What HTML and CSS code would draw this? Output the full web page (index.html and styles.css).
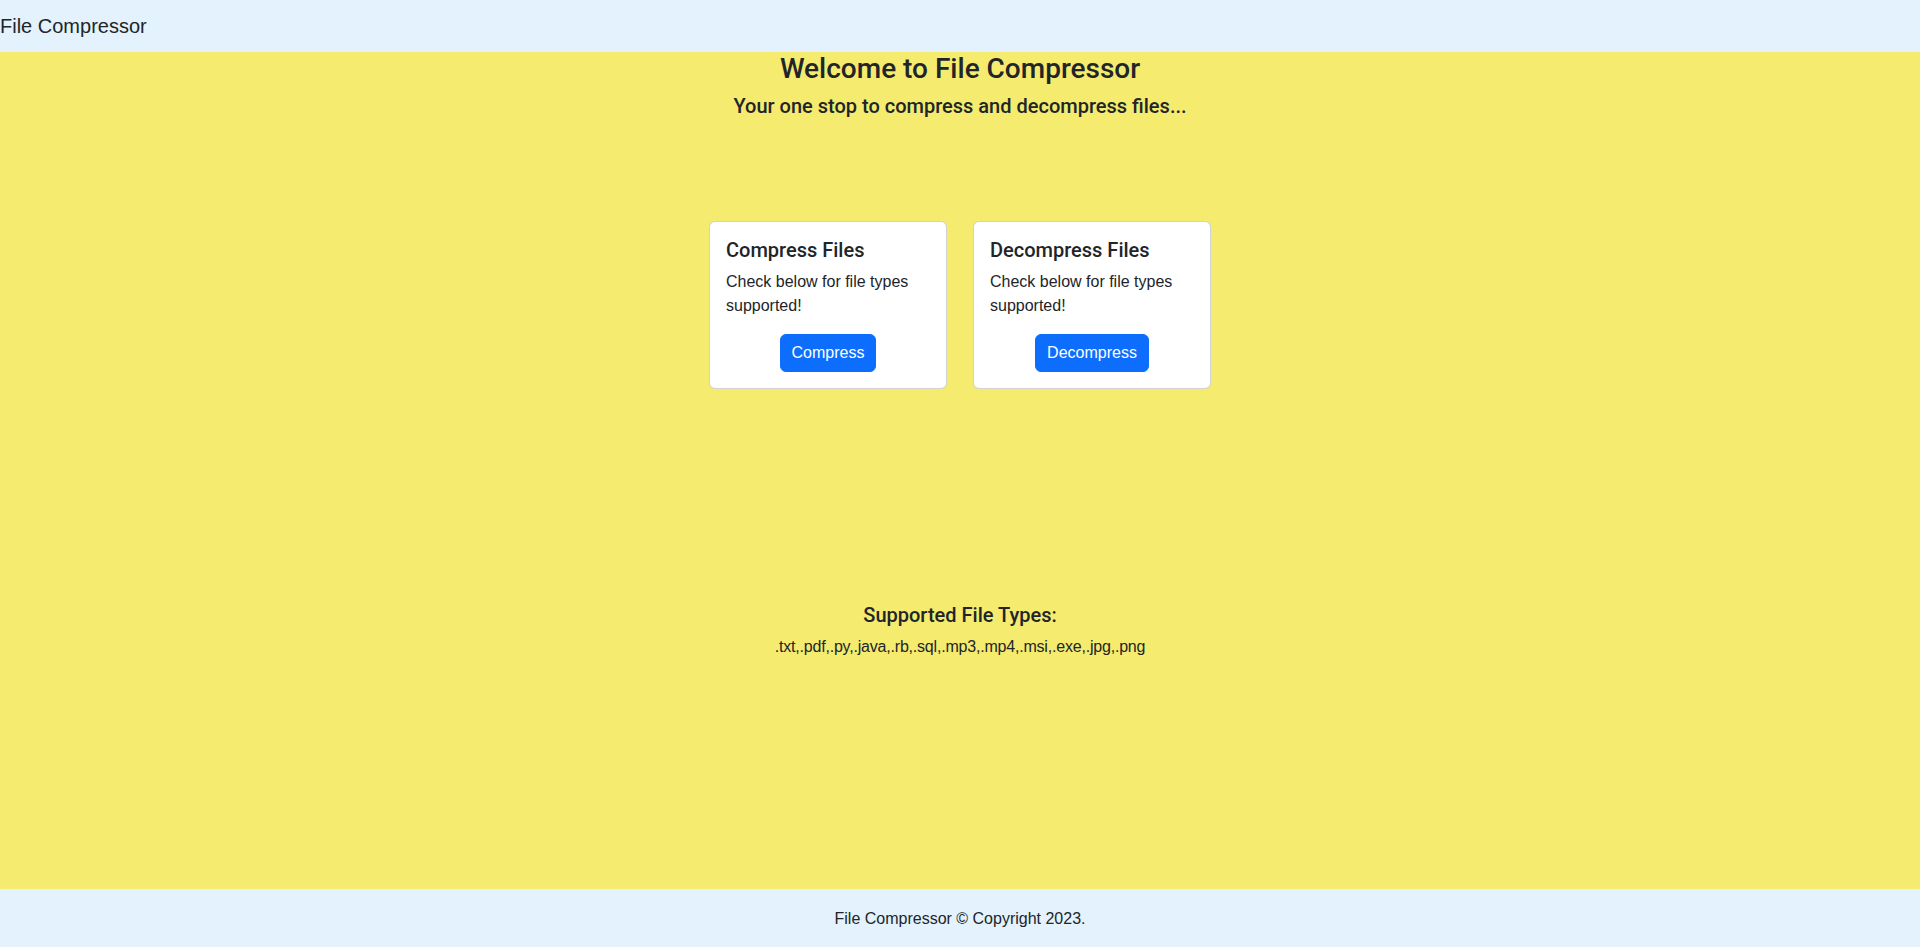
FILE: index.html
```html
<!DOCTYPE html>
<html lang="en">
<head>
<meta charset="utf-8">
<title>File Compressor</title>
<link rel="stylesheet" href="styles.css">
</head>
<body>
<div class="page">
  <nav class="navbar">
    <a class="brand" href="#">File Compressor</a>
  </nav>
  <main class="main">
    <section class="hero">
      <h3 class="hero-title">Welcome to File Compressor</h3>
      <h5 class="hero-sub">Your one stop to compress and decompress files...</h5>
    </section>
    <section class="cards">
      <div class="card">
        <h5 class="card-title">Compress Files</h5>
        <p class="card-text">Check below for file types supported!</p>
        <div class="card-action"><a class="btn" href="#">Compress</a></div>
      </div>
      <div class="card">
        <h5 class="card-title">Decompress Files</h5>
        <p class="card-text">Check below for file types supported!</p>
        <div class="card-action"><a class="btn" href="#">Decompress</a></div>
      </div>
    </section>
    <section class="supported">
      <h5 class="supported-title">Supported File Types:</h5>
      <p class="supported-list">.txt,.pdf,.py,.java,.rb,.sql,.mp3,.mp4,.msi,.exe,.jpg,.png</p>
    </section>
  </main>
  <footer class="footer">
    <p class="footer-text">File Compressor &copy; Copyright 2023.</p>
  </footer>
</div>
</body>
</html>
```

FILE: styles.css
```css
* { box-sizing: border-box; }

html, body {
  margin: 0;
  padding: 0;
}

body {
  font-family: "Liberation Sans", Arial, sans-serif;
  font-size: 16px;
  line-height: 1.5;
  color: #212529;
  background: #f5eb6e;
}

.page {
  display: flex;
  flex-direction: column;
  min-height: 100vh;
}

.navbar {
  height: 52px;
  background: #e3f2fd;
  display: flex;
  align-items: center;
  padding-bottom: 1px;
}

.brand {
  font-size: 20px;
  line-height: 30px;
  color: #212529;
  text-decoration: none;
}

.main {
  flex: 1;
  background: #f5eb6e;
}

.hero {
  text-align: center;
}

.hero-title,
.hero-sub,
.card-title,
.supported-title {
  font-family: Roboto, "Liberation Sans", Arial, sans-serif;
  font-weight: 500;
  line-height: 1.2;
}

.hero-title {
  margin: 0 0 8px;
  font-size: 28px;
}

.hero-sub {
  margin: 0;
  font-size: 20px;
}

.cards {
  display: flex;
  justify-content: center;
  gap: 26px;
  margin-top: 103px;
}

.card {
  width: 238px;
  background: #fff;
  border: 1px solid rgba(0, 0, 0, 0.175);
  border-radius: 6px;
  padding: 16px;
}

.card-title {
  margin: 0 0 8px;
  font-size: 20px;
}

.card-text {
  margin: 0 0 16px;
}

.card-action {
  display: flex;
  justify-content: center;
}

.btn {
  display: inline-block;
  padding: 6px 11px;
  border: 1px solid #0d6efd;
  border-radius: 6px;
  background: #0d6efd;
  color: #fff;
  font-size: 16px;
  line-height: 24px;
  text-decoration: none;
}

.supported {
  margin-top: 214px;
  text-align: center;
}

.supported-title {
  margin: 0 0 8px;
  font-size: 20px;
}

.supported-list {
  margin: 0;
  letter-spacing: -0.2px;
}

.footer {
  height: 58px;
  background: #e3f2fd;
  display: flex;
  align-items: center;
  justify-content: center;
  padding-top: 2px;
}

.footer-text {
  margin: 0;
}
```
